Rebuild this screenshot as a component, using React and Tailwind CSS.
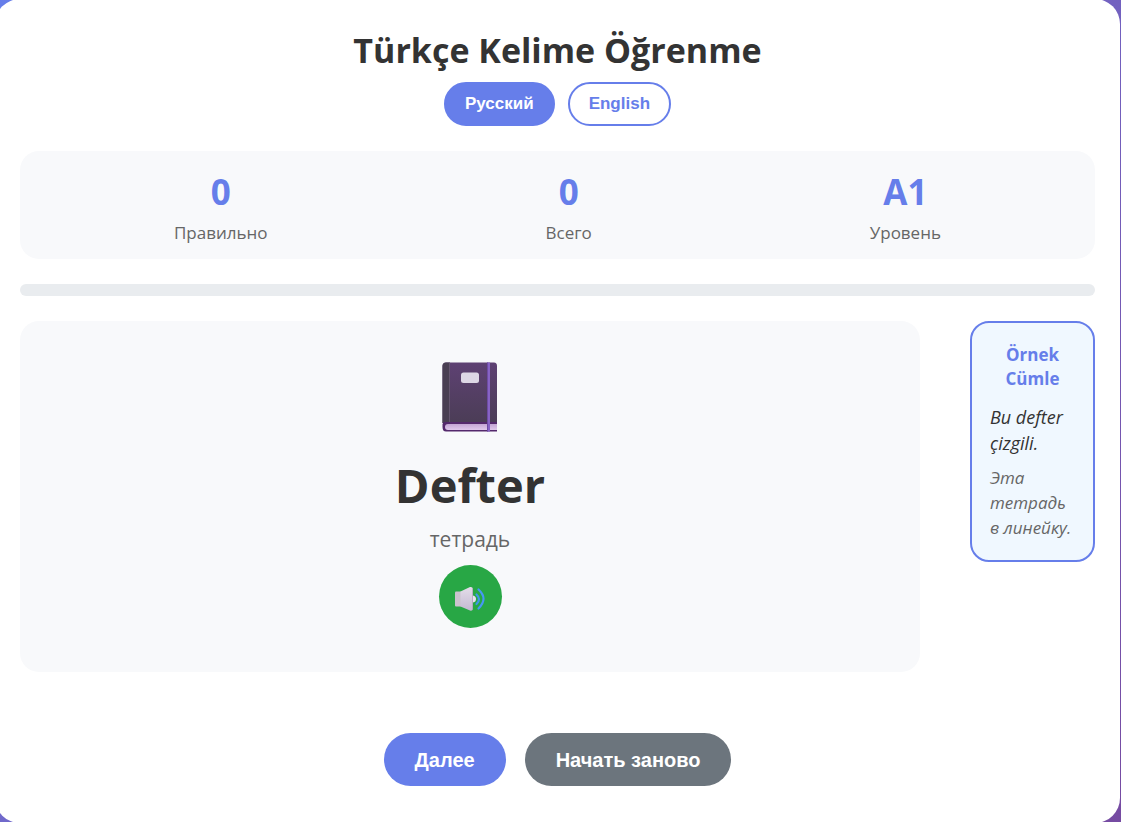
import React from "react";
import { useState } from "react";

const TEXTS = {
  ru: {
    correct: "Правильно",
    total: "Всего",
    level: "Уровень",
    word: "тетрадь",
    sentence: "Эта тетрадь в линейку.",
    next: "Далее",
    restart: "Начать заново",
  },
  en: {
    correct: "Correct",
    total: "Total",
    level: "Level",
    word: "notebook",
    sentence: "This notebook is lined.",
    next: "Next",
    restart: "Restart",
  },
};

const NotebookIcon = () => (
  <svg width="56" height="70" viewBox="0 0 56 70" aria-hidden="true">
    <defs>
      <linearGradient id="cover" x1="0" y1="0" x2="0" y2="1">
        <stop offset="0" stopColor="#5e4173" />
        <stop offset="1" stopColor="#4b3d56" />
      </linearGradient>
      <linearGradient id="pages" x1="0" y1="0" x2="0" y2="1">
        <stop offset="0" stopColor="#c3a5d3" />
        <stop offset="1" stopColor="#e0c8ec" />
      </linearGradient>
    </defs>
    <path d="M4 .5H52Q55 .5 55 4V61H.5V4Q.5 .5 4 .5Z" fill="url(#cover)" />
    <path d="M4 .5H7.5V61H.5V4Q.5 .5 4 .5Z" fill="#493f52" />
    <path d="M7 .5H8V61H7Z" fill="#65566f" />
    <path d="M3 60H55V69.5H4Q.5 69.5 .5 65V62Q1 60 3 60Z" fill="#54296c" />
    <path d="M55 62H6Q3 62 3 65Q3 68 6 68H55Z" fill="url(#pages)" />
    <rect x="19" y="10.5" width="18" height="10.5" rx="2.5" fill="#ddd7e5" />
    <path d="M45 .5H48V69.5H45Z" fill="#8763c5" />
    <path d="M45 .5H46V69.5H45Z" fill="#6e4ba3" />
  </svg>
);

const SpeakerIcon = () => (
  <svg width="32" height="26" viewBox="0 0 32 26" aria-hidden="true">
    <defs>
      <linearGradient id="horn" x1="0" y1="0" x2="0" y2="1">
        <stop offset="0" stopColor="#e4dde9" />
        <stop offset="1" stopColor="#c4b9d2" />
      </linearGradient>
    </defs>
    <path d="M2 5.5H7V20.5H2Q1 20.5 1 19.5V6.5Q1 5.5 2 5.5Z" fill="#cbc2cd" />
    <path d="M6.5 5.5L16 1Q19 .5 19 4V22Q19 25.5 16 24.5L6.5 20.5Z" fill="url(#horn)" />
    <path d="M18.3 1.8Q19 2 19 4V22Q19 24 18.3 24.2Z" fill="#a99db5" />
    <path d="M19 9.5Q22 10 22 13Q22 16 19 16.5Z" fill="#e7e2f2" />
    <path d="M22.5 8.5Q27.5 13 22.5 18" fill="none" stroke="#3f97ea" strokeWidth="2.2" strokeLinecap="round" />
    <path d="M24.5 3.5Q34.5 12.5 24.5 22.5" fill="none" stroke="#4797f5" strokeWidth="2.2" strokeLinecap="round" />
  </svg>
);

const Stat = ({ value, label }) => (
  <div className="text-center">
    <div className="text-[35px] leading-[48px] font-bold text-[#667eea]">{value}</div>
    <div className="text-[17px] leading-6 mt-[5px] text-[#666]">{label}</div>
  </div>
);

const LangButton = ({ active, onClick, children }) => (
  <button
    type="button"
    onClick={onClick}
    className={`h-11 px-[19px] rounded-full border-2 border-[#667eea] font-['Liberation_Sans',sans-serif] text-[17px] font-bold ${
      active ? "bg-[#667eea] text-white" : "bg-white text-[#667eea]"
    }`}
  >
    {children}
  </button>
);

const App = () => {
  const [lang, setLang] = useState("ru");
  const [total, setTotal] = useState(0);
  const t = TEXTS[lang];

  return (
    <div className="h-screen overflow-hidden bg-linear-135 from-[#667eea] to-[#764ba2] pr-px font-['Open_Sans',sans-serif] text-[#333]">
      <main className="-mt-px -ml-[5px] min-h-[calc(100vh+2px)] rounded-[25px] bg-white p-[25px]">
        <header className="flex flex-col items-center">
          <h1 className="text-[34px] leading-[52px] font-bold">Türkçe Kelime Öğrenme</h1>
          <div className="flex gap-[13px] mt-1.5">
            <LangButton active={lang === "ru"} onClick={() => setLang("ru")}>
              Русский
            </LangButton>
            <LangButton active={lang === "en"} onClick={() => setLang("en")}>
              English
            </LangButton>
          </div>
        </header>

        <section className="flex justify-around mt-[25px] px-[15px] pt-[17px] pb-[14px] rounded-[19px] bg-[#f8f9fb]">
          <Stat value={0} label={t.correct} />
          <Stat value={total} label={t.total} />
          <Stat value="A1" label={t.level} />
        </section>

        <div className="mt-[25px] h-3 rounded-md bg-[#e9ecef]" />

        <div className="flex items-start gap-[50px] mt-[25px]">
          <section className="flex-1 flex flex-col items-center pt-[41px] pb-11 rounded-[19px] bg-[#f8f9fb]">
            <NotebookIcon />
            <h2 className="mt-5 text-[47px] leading-[66px] font-bold">Defter</h2>
            <p className="mt-1 text-[21px] leading-[34px] text-[#666]">{t.word}</p>
            <button
              type="button"
              aria-label="Dinle"
              className="mt-[9px] size-[63px] pt-1 rounded-full bg-[#28a745] flex items-center justify-center"
            >
              <SpeakerIcon />
            </button>
          </section>

          <aside className="w-[125px] rounded-[19px] border-2 border-[#667eea] bg-[#f0f8ff] px-[18px] py-5">
            <h3 className="text-center text-[17px] leading-6 font-bold text-[#667eea]">Örnek Cümle</h3>
            <p className="mt-[13px] text-[18px] leading-[26px] italic">Bu defter çizgili.</p>
            <p className="mt-[9px] text-[17px] leading-[25px] italic text-[#666]">{t.sentence}</p>
          </aside>
        </div>

        <div className="flex justify-center gap-[19px] mt-[61px] font-['Liberation_Sans',sans-serif] text-[20px] font-bold text-white">
          <button
            type="button"
            onClick={() => setTotal(total + 1)}
            className="h-[53px] px-[31px] rounded-full bg-[#667eea]"
          >
            {t.next}
          </button>
          <button
            type="button"
            onClick={() => setTotal(0)}
            className="h-[53px] px-[31px] rounded-full bg-[#6c757d]"
          >
            {t.restart}
          </button>
        </div>
      </main>
    </div>
  );
};

export default App;
